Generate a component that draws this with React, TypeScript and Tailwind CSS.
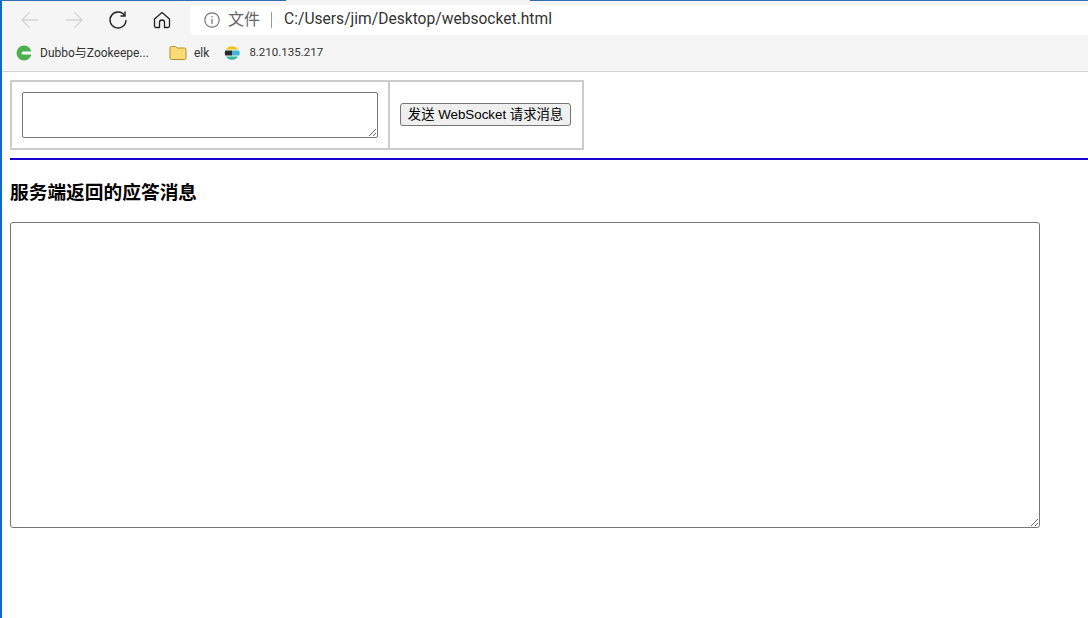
import React from "react";

const UI_FONT = "font-['Roboto','Open_Sans','Noto_Sans_CJK_SC',sans-serif]";

function BackIcon({ flip }: { flip?: boolean }) {
  return (
    <svg width="20" height="20" viewBox="0 0 20 20" fill="none" stroke="#d4d4d4" strokeWidth="1.3" className={flip ? "-scale-x-100" : ""}>
      <path d="M2 10H18M9.5 2.5L2 10L9.5 17.5" />
    </svg>
  );
}

function ReloadIcon() {
  return (
    <svg width="20" height="20" viewBox="0 0 20 20" fill="none" stroke="#222" strokeWidth="1.4">
      <path d="M16.6 5.5A8 8 0 1 0 18 10" />
      <path d="M17 1.5V6H12.5" />
    </svg>
  );
}

function HomeIcon() {
  return (
    <svg width="18" height="18" viewBox="0 0 18 18" fill="none" stroke="#222" strokeWidth="1.3" strokeLinejoin="round">
      <path d="M1.5 8L9 1.5L16.5 8V15A1.5 1.5 0 0 1 15 16.5H11.5V11.5A2.5 2.5 0 0 0 6.5 11.5V16.5H3A1.5 1.5 0 0 1 1.5 15Z" />
    </svg>
  );
}

function InfoIcon() {
  return (
    <svg width="16" height="16" viewBox="0 0 16 16" fill="none" stroke="#757575" strokeWidth="1.2">
      <circle cx="8" cy="8" r="7.2" />
      <path d="M8 7V12M8 4V5.4" />
    </svg>
  );
}

function CircleC() {
  return (
    <svg width="16" height="16" viewBox="0 0 16 16">
      <circle cx="8" cy="8" r="7.5" fill="#4caf50" />
      <path d="M7 6.5H16V9.5H7A1.5 1.5 0 0 1 7 6.5Z" fill="#fff" />
    </svg>
  );
}

function FolderIcon() {
  return (
    <svg width="18" height="16" viewBox="0 0 18 16">
      <path d="M1 3A1.5 1.5 0 0 1 2.5 1.5H6.5L8 3H15.5A1.5 1.5 0 0 1 17 4.5V13A1.5 1.5 0 0 1 15.5 14.5H2.5A1.5 1.5 0 0 1 1 13Z" fill="#f8dc74" stroke="#b3922e" />
    </svg>
  );
}

function ElasticIcon() {
  return (
    <svg width="16" height="16" viewBox="0 0 16 16">
      <path d="M2 4.6A7 7 0 0 1 14 4.6Z" fill="#f0c419" />
      <path d="M1.2 5.4H8V10.6H1.2A7 7 0 0 1 1.2 5.4Z" fill="#26292e" />
      <path d="M8 5.4H15.2A7 7 0 0 1 15.2 10.6H8Z" fill="#3fb6d3" />
      <path d="M2 11.4H14A7 7 0 0 1 2 11.4Z" fill="#35b8a0" />
    </svg>
  );
}

export default function App() {
  return (
    <div className="flex h-[618px] w-[1088px] overflow-hidden bg-white">
      <div className="w-[2px] shrink-0 bg-[#0a6cc4]" />
      <div className="flex min-w-0 flex-1 flex-col">
        {/* browser chrome */}
        <div className={`h-[72px] shrink-0 border-b border-[#d2d2d2] bg-[#f5f5f5] ${UI_FONT}`}>
          <div className="flex h-[1px]">
            <div className="w-[284px] bg-[#2f6db5]" />
            <div className="w-[244px]" />
            <div className="flex-1 bg-[#2f6db5]" />
          </div>
          <div className="flex h-[34px] items-end">
            <div className="ml-[18px] flex h-[30px] w-[170px] items-center">
              <BackIcon />
              <div className="ml-[24px]"><BackIcon flip /></div>
              <div className="ml-[24px]"><ReloadIcon /></div>
              <div className="ml-[25px]"><HomeIcon /></div>
            </div>
            <div className="flex h-[30px] flex-1 items-center rounded-l-[4px] bg-white pl-[14px] text-[#333]">
              <InfoIcon />
              <span className="ml-[8px] text-[16px] text-[#666]">文件</span>
              <span className="ml-[11px] h-[16px] w-px bg-[#999]" />
              <span className="ml-[12px] text-[15.6px]">C:/Users/jim/Desktop/websocket.html</span>
            </div>
          </div>
          <div className="flex h-[36px] items-center pl-[14px] text-[12px] text-[#333]">
            <CircleC />
            <span className="ml-[8px] w-[114px] truncate">Dubbo与Zookeepe...</span>
            <div className="ml-[15px]"><FolderIcon /></div>
            <span className="ml-[7px]">elk</span>
            <div className="ml-[15px]"><ElasticIcon /></div>
            <span className="ml-[9px] text-[11.5px]">8.210.135.217</span>
          </div>
        </div>

        {/* page */}
        <div className="pl-[8px] pt-[8px] font-['Liberation_Sans','Noto_Sans_CJK_SC',sans-serif] text-black">
          <table className="border-separate border-spacing-0 border-2 border-[#cccccc]">
            <tbody>
              <tr>
                <td className="h-[66px] w-[378px] border-r-2 border-[#cccccc] pl-[10px] align-middle">
                  <textarea className="block h-[46px] w-[356px] resize rounded-[2px] border border-[#767676] bg-white" />
                </td>
                <td className="w-[192px] pl-[10px] align-middle">
                  <button className="mb-[1px] block h-[23px] w-[171px] rounded-[3px] border border-[#767676] bg-[#efefef] text-[13.33px] leading-none whitespace-nowrap">
                    发送 WebSocket 请求消息
                  </button>
                </td>
              </tr>
            </tbody>
          </table>
          <hr className="mt-[8px] h-[2px] border-0 bg-[#1a00cc]" />
          <h3 className="mt-[20px] text-[18.72px] leading-[26px] font-bold">服务端返回的应答消息</h3>
          <textarea className="mt-[16px] block h-[306px] w-[1030px] resize rounded-[3px] border border-[#767676] bg-white" />
        </div>
      </div>
    </div>
  );
}
